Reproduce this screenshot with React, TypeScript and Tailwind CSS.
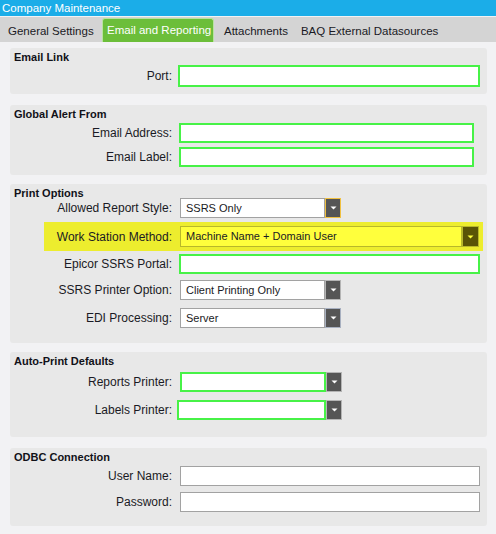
import type { ReactNode } from 'react'

// ─── Small pieces ─────────────────────────────────────────────
const Arrow = ({ color = '#ffffff' }: { color?: string }) => (
  <svg width="7" height="4" viewBox="0 0 7 4">
    <polygon points="0.5,0.5 6.5,0.5 3.5,3.5" fill={color} />
  </svg>
)

const Label = ({ children }: { children: ReactNode }) => (
  <div className="w-[163px] shrink-0 text-right pr-[1px] text-[12px] leading-none text-[#1a1a24]">{children}</div>
)

// green-bordered text box (required / focused style)
const GreenBox = ({ w, h = 'h-[20px]' }: { w: string; h?: string }) => (
  <div className={`${w} ${h} bg-white border-2 border-[#47f247]`} />
)

const PlainBox = ({ w }: { w: string }) => (
  <div className={`${w} h-[20px] bg-white border border-[#a2a2a2]`} />
)

interface SelectProps { value: string; w: string; btnBorder?: string }

const Select = ({ value, w, btnBorder = 'border-[#b4b4b4]' }: SelectProps) => (
  <div className={`${w} h-[20px] flex`}>
    <div className="flex-1 bg-white border border-[#a2a2a2] flex items-center pl-[5px] text-[11px] text-[#1a1a24]">
      {value}
    </div>
    <div className={`w-[16px] h-full bg-[#555555] border ${btnBorder} flex items-center justify-center`}>
      <Arrow />
    </div>
  </div>
)

const Group = ({ title, className, children }: { title: string; className: string; children: ReactNode }) => (
  <div className={`ml-[10px] w-[477px] bg-[#e8e8e8] rounded-[3px] ${className}`}>
    <div className="pl-[4px] pt-[3px] text-[11px] font-bold leading-[13px] text-[#111118]">{title}</div>
    {children}
  </div>
)

// ─── Main ─────────────────────────────────────────────────────
export default function App() {
  return (
    <div
      className="w-[496px] h-[534px] bg-[#f2f2f4] overflow-hidden"
      style={{ fontFamily: '"Liberation Sans", Arial, sans-serif' }}
    >
      {/* title bar */}
      <div className="h-[16px] bg-[#1bade8] text-white text-[11.5px] leading-[16px] pl-[2px]">Company Maintenance</div>

      {/* tab strip */}
      <div className="mt-[1px] h-[25px] bg-[#d4d4d4] flex items-end text-[11.5px] text-[#1a1a24]">
        <div className="w-[100px] h-full flex items-center pl-[8px] pt-[5px]">General Settings</div>
        <div className="ml-[2px] w-[112px] h-[24px] bg-[#6cbe3a] border border-[#b9e3a0] border-b-0 rounded-t-[3px] text-white flex items-center pl-[4px] pt-[1px]">
          Email and Reporting
        </div>
        <div className="h-full flex items-center pl-[10px] pt-[5px]">Attachments</div>
        <div className="h-full flex items-center pl-[13px] pt-[5px]">BAQ External Datasources</div>
      </div>

      {/* Email Link */}
      <Group title="Email Link" className="mt-[6px] h-[46px]">
        <div className="flex items-center mt-[1px]">
          <Label>Port:</Label>
          <div className="ml-[5px]"><GreenBox w="w-[302px]" h="h-[22px]" /></div>
        </div>
      </Group>

      {/* Global Alert From */}
      <Group title="Global Alert From" className="mt-[11px] h-[70px]">
        <div className="flex items-center mt-[2px]">
          <Label>Email Address:</Label>
          <div className="ml-[6px]"><GreenBox w="w-[295px]" /></div>
        </div>
        <div className="flex items-center mt-[4px]">
          <Label>Email Label:</Label>
          <div className="ml-[6px]"><GreenBox w="w-[295px]" /></div>
        </div>
      </Group>

      {/* Print Options */}
      <Group title="Print Options" className="mt-[9px] h-[159px]">
        <div className="flex items-center mt-[-2px]">
          <Label>Allowed Report Style:</Label>
          <div className="ml-[7px]"><Select value="SSRS Only" w="w-[161px]" btnBorder="border-[#f0c040]" /></div>
        </div>
        <div className="mt-[4px] ml-[34px] w-[439px] h-[29px] bg-[#eded2e] flex items-center">
          <div className="w-[129px] shrink-0 text-right pr-[1px] text-[12px] leading-none text-[#1a1a24]">Work Station Method:</div>
          <div className="ml-[7px] w-[299px] h-[21px] flex">
            <div className="flex-1 bg-[#ffff3c] border border-[#b8b82a] flex items-center pl-[5px] text-[11px] text-[#1a1a24]">
              Machine Name + Domain User
            </div>
            <div className="w-[17px] h-full bg-[#5a5406] border border-[#b8b82a] flex items-center justify-center">
              <Arrow color="#ffff3c" />
            </div>
          </div>
        </div>
        <div className="flex items-center mt-[3px]">
          <Label>Epicor SSRS Portal:</Label>
          <div className="ml-[6px]"><GreenBox w="w-[301px]" /></div>
        </div>
        <div className="flex items-center mt-[6px]">
          <Label>SSRS Printer Option:</Label>
          <div className="ml-[7px]"><Select value="Client Printing Only" w="w-[161px]" /></div>
        </div>
        <div className="flex items-center mt-[8px]">
          <Label>EDI Processing:</Label>
          <div className="ml-[7px]"><Select value="Server" w="w-[161px]" btnBorder="border-[#a8b0c0]" /></div>
        </div>
      </Group>

      {/* Auto-Print Defaults */}
      <Group title="Auto-Print Defaults" className="mt-[9px] h-[85px]">
        <div className="flex items-center mt-[4px]">
          <Label>Reports Printer:</Label>
          <div className="ml-[7px] flex">
            <GreenBox w="w-[146px]" />
            <div className="w-[16px] h-[20px] bg-[#555555] border border-[#b4b4b4] flex items-center justify-center"><Arrow /></div>
          </div>
        </div>
        <div className="flex items-center mt-[8px]">
          <Label>Labels Printer:</Label>
          <div className="ml-[4px] flex">
            <GreenBox w="w-[149px]" />
            <div className="w-[16px] h-[20px] bg-[#555555] border border-[#b4b4b4] flex items-center justify-center"><Arrow /></div>
          </div>
        </div>
      </Group>

      {/* ODBC Connection */}
      <Group title="ODBC Connection" className="mt-[11px] h-[78px]">
        <div className="flex items-center mt-[2px]">
          <Label>User Name:</Label>
          <div className="ml-[7px]"><PlainBox w="w-[300px]" /></div>
        </div>
        <div className="flex items-center mt-[6px]">
          <Label>Password:</Label>
          <div className="ml-[7px]"><PlainBox w="w-[300px]" /></div>
        </div>
      </Group>
    </div>
  )
}
